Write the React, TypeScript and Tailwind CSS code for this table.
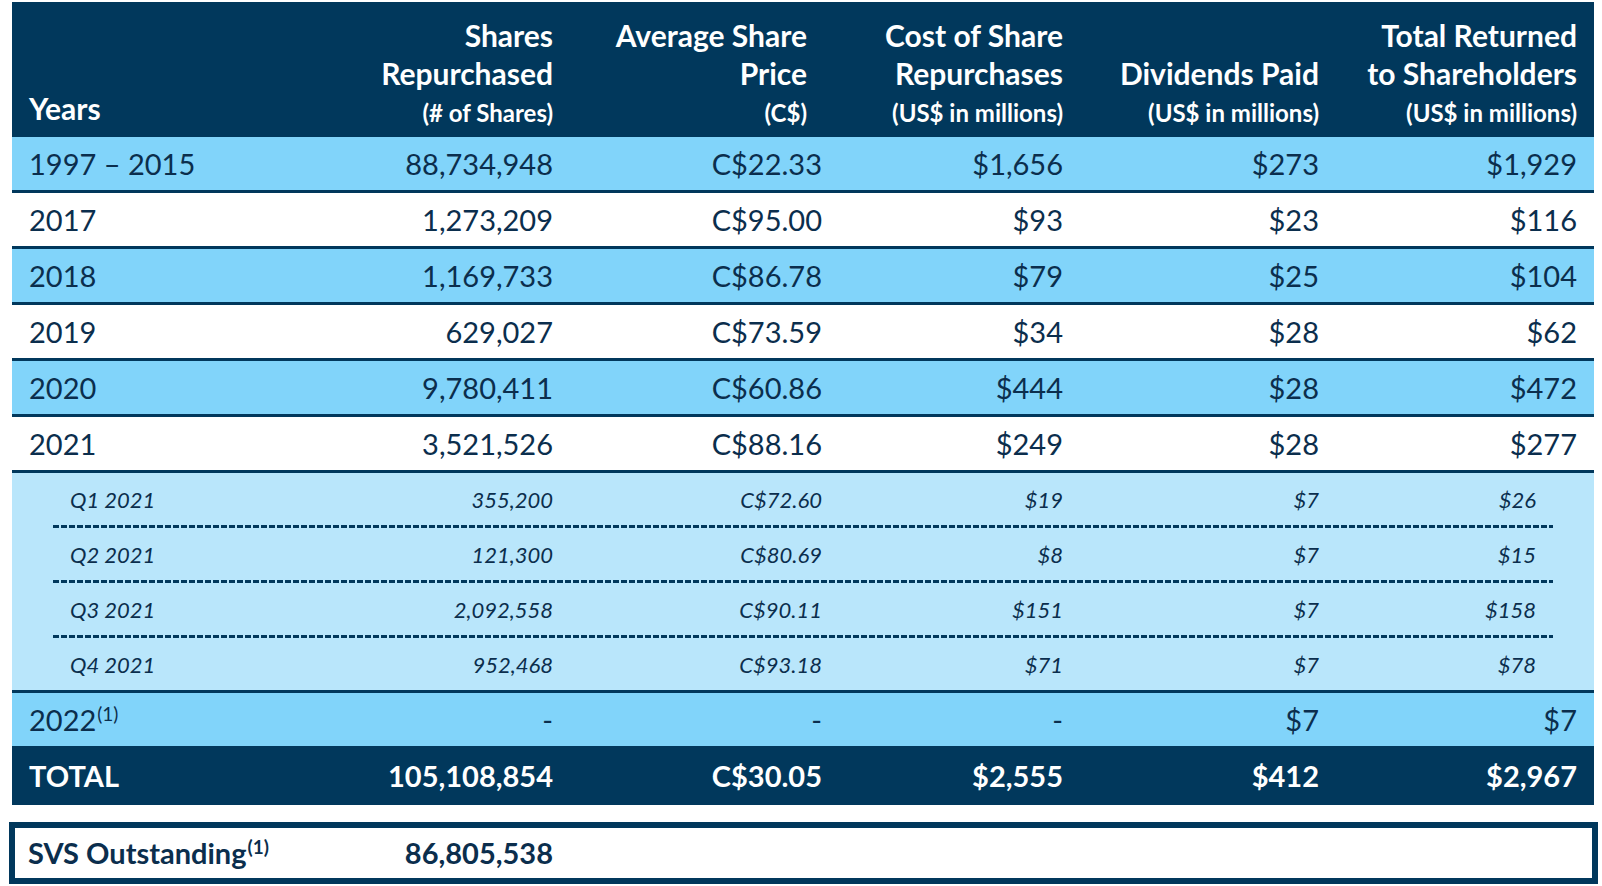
import React from "react"

const cols = "grid grid-cols-[348px_193px_269px_241px_256px_258px]"

const years = [
  { year: "1997 – 2015", shares: "88,734,948", price: "C$22.33", cost: "$1,656", div: "$273", total: "$1,929", bg: "bg-[#81d4fa]" },
  { year: "2017", shares: "1,273,209", price: "C$95.00", cost: "$93", div: "$23", total: "$116", bg: "bg-white" },
  { year: "2018", shares: "1,169,733", price: "C$86.78", cost: "$79", div: "$25", total: "$104", bg: "bg-[#81d4fa]" },
  { year: "2019", shares: "629,027", price: "C$73.59", cost: "$34", div: "$28", total: "$62", bg: "bg-white" },
  { year: "2020", shares: "9,780,411", price: "C$60.86", cost: "$444", div: "$28", total: "$472", bg: "bg-[#81d4fa]" },
  { year: "2021", shares: "3,521,526", price: "C$88.16", cost: "$249", div: "$28", total: "$277", bg: "bg-white" },
]

const quarters = [
  { q: "Q1 2021", shares: "355,200", price: "C$72.60", cost: "$19", div: "$7", total: "$26" },
  { q: "Q2 2021", shares: "121,300", price: "C$80.69", cost: "$8", div: "$7", total: "$15" },
  { q: "Q3 2021", shares: "2,092,558", price: "C$90.11", cost: "$151", div: "$7", total: "$158" },
  { q: "Q4 2021", shares: "952,468", price: "C$93.18", cost: "$71", div: "$7", total: "$78" },
]

function HeaderCell({ lines, unit, className = "" }: { lines: string[]; unit: string; className?: string }) {
  return (
    <div className={`flex flex-col justify-end pb-[4px] text-right ${className}`}>
      {lines.map((l) => (
        <div key={l} className="text-[30px] leading-[38px] font-bold whitespace-nowrap">{l}</div>
      ))}
      <div className="text-[24px] leading-[41px] font-bold whitespace-nowrap">{unit}</div>
    </div>
  )
}

function Dashes() {
  return <div className="mx-[41px] h-[3px] bg-[repeating-linear-gradient(90deg,#01385c_0_6px,transparent_6px_8px)]" />
}

export default function App() {
  return (
    <div className="w-[1602px] h-[886px] bg-white pt-[2px] pl-[12px] text-[#0b2e4d] [font-family:Lato,sans-serif]">
      <div className="w-[1582px]">
        {/* header */}
        <div className={`${cols} h-[135px] bg-[#01385c] pr-[17px] text-white`}>
          <div className="flex items-end pl-[17px] pb-[10px]">
            <span className="text-[30px] leading-[38px] font-bold">Years</span>
          </div>
          <HeaderCell lines={["Shares", "Repurchased"]} unit="(# of Shares)" />
          <HeaderCell lines={["Average Share", "Price"]} unit="(C$)" className="pr-[15px]" />
          <HeaderCell lines={["Cost of Share", "Repurchases"]} unit="(US$ in millions)" />
          <HeaderCell lines={["Dividends Paid"]} unit="(US$ in millions)" />
          <HeaderCell lines={["Total Returned", "to Shareholders"]} unit="(US$ in millions)" />
        </div>

        {/* yearly rows */}
        {years.map((r) => (
          <div key={r.year} className={`${cols} h-[56px] items-center pr-[17px] border-b-[3px] border-[#01385c] text-[29px] ${r.bg}`}>
            <div className="pl-[17px] whitespace-nowrap">{r.year}</div>
            <div className="text-right">{r.shares}</div>
            <div className="text-right">{r.price}</div>
            <div className="text-right">{r.cost}</div>
            <div className="text-right">{r.div}</div>
            <div className="text-right">{r.total}</div>
          </div>
        ))}

        {/* 2021 by quarter */}
        <div className="bg-[#b9e6fb] border-b-[3px] border-[#01385c]">
          {quarters.map((r, i) => (
            <div key={r.q}>
              <div className={`${cols} h-[52px] items-center pr-[17px] text-[22px] italic`}>
                <div className="pl-[58px]">{r.q}</div>
                <div className="text-right">{r.shares}</div>
                <div className="text-right">{r.price}</div>
                <div className="text-right">{r.cost}</div>
                <div className="text-right">{r.div}</div>
                <div className="text-right pr-[41px]">{r.total}</div>
              </div>
              {i < quarters.length - 1 && <Dashes />}
            </div>
          ))}
        </div>

        {/* 2022 */}
        <div className={`${cols} h-[53px] items-center pr-[17px] bg-[#81d4fa] text-[29px]`}>
          <div className="pl-[17px]">
            2022<sup className="text-[19px] relative -top-[10px] ml-[1px]">(1)</sup>
          </div>
          <div className="text-right">-</div>
          <div className="text-right">-</div>
          <div className="text-right">-</div>
          <div className="text-right">$7</div>
          <div className="text-right">$7</div>
        </div>

        {/* total */}
        <div className={`${cols} h-[59px] items-center pr-[17px] bg-[#01385c] text-white text-[29px] font-bold`}>
          <div className="pl-[17px]">TOTAL</div>
          <div className="text-right">105,108,854</div>
          <div className="text-right">C$30.05</div>
          <div className="text-right">$2,555</div>
          <div className="text-right">$412</div>
          <div className="text-right">$2,967</div>
        </div>
      </div>

      {/* SVS outstanding */}
      <div className="mt-[17px] -ml-[3px] w-[1589px] h-[62px] border-[6px] border-[#01385c] flex items-center">
        <div className="w-[538px] flex justify-between pl-[13px] text-[29px] font-bold">
          <span>
            SVS Outstanding<sup className="text-[19px] relative -top-[10px] ml-[1px]">(1)</sup>
          </span>
          <span>86,805,538</span>
        </div>
      </div>
    </div>
  )
}
